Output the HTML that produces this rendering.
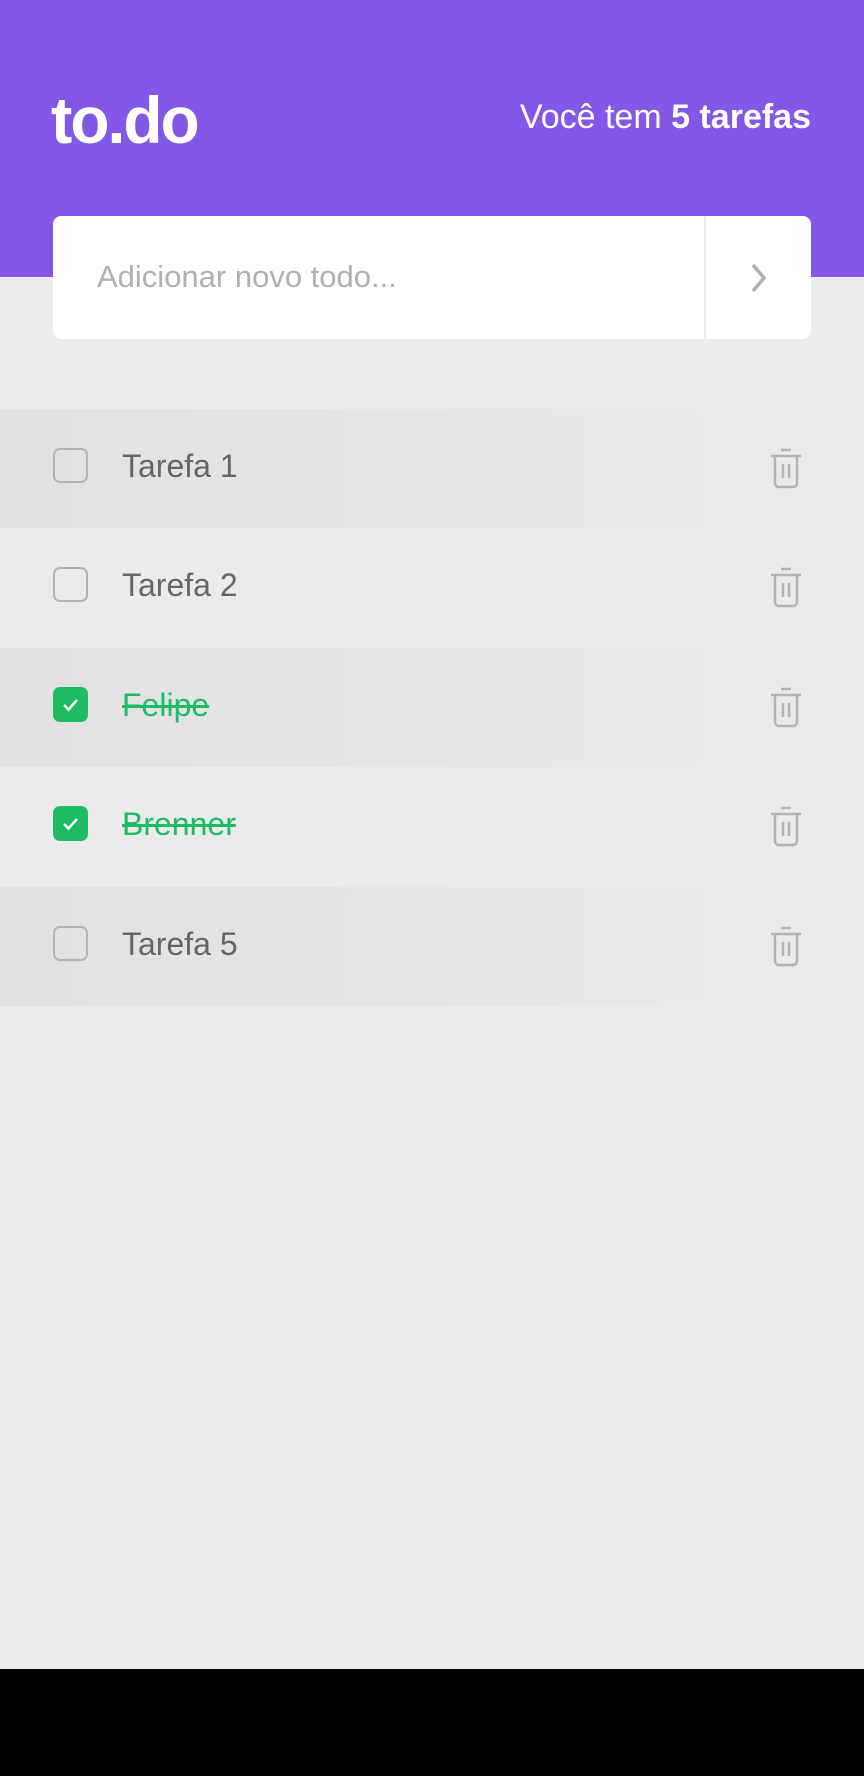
<!DOCTYPE html>
<html><head><meta charset="utf-8"><style>
*{margin:0;padding:0;box-sizing:border-box}
body{width:864px;height:1776px;background:#ebebeb;font-family:"Liberation Sans",sans-serif;position:relative;overflow:hidden}
.hdr{position:absolute;left:0;top:0;width:864px;height:277px;background:#8458e6}
.logo{position:absolute;left:51px;top:82px;color:#fff;font-weight:bold;font-size:66px;letter-spacing:-2px;transform:scaleX(0.97);transform-origin:left}
.cnt{position:absolute;right:53px;top:98px;color:#fff;font-size:34px}
.inp{position:absolute;left:53px;top:216px;width:758px;height:123px;background:#fff;border-radius:8px}
.ph{position:absolute;left:44px;top:43px;color:#b0b0b0;font-size:31px}
.div{position:absolute;left:651px;top:0;width:2px;height:123px;background:#ebebeb}
.chev{position:absolute;left:693px;top:46px}
.row{position:absolute;left:0;width:864px;height:119px}
.sh{background:linear-gradient(to right,#e2e2e2 0%,#e6e6e6 60%,#eaeaea 85%,#ebebeb 100%)}
.cb{position:absolute;left:53px;top:39px;width:35px;height:35px;border:2px solid #b3b3b3;border-radius:7px}
.cb.on{background:#1dbb63;border-color:#1dbb63}
.t{position:absolute;left:122px;top:39px;font-size:32px;color:#666}
.t.on{color:#1dbb63;text-decoration:line-through}
.tr{position:absolute;left:768px;top:38px}
.bot{position:absolute;left:0;top:1669px;width:864px;height:107px;background:#000}
</style></head><body>
<div class="hdr"><div class="logo">to.do</div><div class="cnt">Você tem <b>5 tarefas</b></div></div>
<div class="inp"><div class="ph">Adicionar novo todo...</div><div class="div"></div>
<svg class="chev" width="24" height="32" viewBox="0 0 24 32"><path d="M7 3 L18 16 L7 29" fill="none" stroke="#b0b0b0" stroke-width="3.5"/></svg></div>

<div class="row sh" style="top:409px"><div class="cb"></div><div class="t">Tarefa 1</div>
<svg class="tr" width="36" height="42" viewBox="0 0 36 42"><path d="M13 3h10M3 9h30M7 9v27a4 4 0 0 0 4 4h14a4 4 0 0 0 4-4V9M15 17v14M21 17v14" fill="none" stroke="#b3b3b3" stroke-width="2.5"/></svg></div>
<div class="row" style="top:528px"><div class="cb"></div><div class="t">Tarefa 2</div>
<svg class="tr" width="36" height="42" viewBox="0 0 36 42"><path d="M13 3h10M3 9h30M7 9v27a4 4 0 0 0 4 4h14a4 4 0 0 0 4-4V9M15 17v14M21 17v14" fill="none" stroke="#b3b3b3" stroke-width="2.5"/></svg></div>
<div class="row sh" style="top:648px"><div class="cb on"><svg width="31" height="31" viewBox="0 0 31 31"><path d="M9 16l4.5 4.5L22 11" fill="none" stroke="#fff" stroke-width="2.5"/></svg></div><div class="t on">Felipe</div>
<svg class="tr" width="36" height="42" viewBox="0 0 36 42"><path d="M13 3h10M3 9h30M7 9v27a4 4 0 0 0 4 4h14a4 4 0 0 0 4-4V9M15 17v14M21 17v14" fill="none" stroke="#b3b3b3" stroke-width="2.5"/></svg></div>
<div class="row" style="top:767px"><div class="cb on"><svg width="31" height="31" viewBox="0 0 31 31"><path d="M9 16l4.5 4.5L22 11" fill="none" stroke="#fff" stroke-width="2.5"/></svg></div><div class="t on">Brenner</div>
<svg class="tr" width="36" height="42" viewBox="0 0 36 42"><path d="M13 3h10M3 9h30M7 9v27a4 4 0 0 0 4 4h14a4 4 0 0 0 4-4V9M15 17v14M21 17v14" fill="none" stroke="#b3b3b3" stroke-width="2.5"/></svg></div>
<div class="row sh" style="top:887px"><div class="cb"></div><div class="t">Tarefa 5</div>
<svg class="tr" width="36" height="42" viewBox="0 0 36 42"><path d="M13 3h10M3 9h30M7 9v27a4 4 0 0 0 4 4h14a4 4 0 0 0 4-4V9M15 17v14M21 17v14" fill="none" stroke="#b3b3b3" stroke-width="2.5"/></svg></div>
<div class="bot"></div>
</body></html>
